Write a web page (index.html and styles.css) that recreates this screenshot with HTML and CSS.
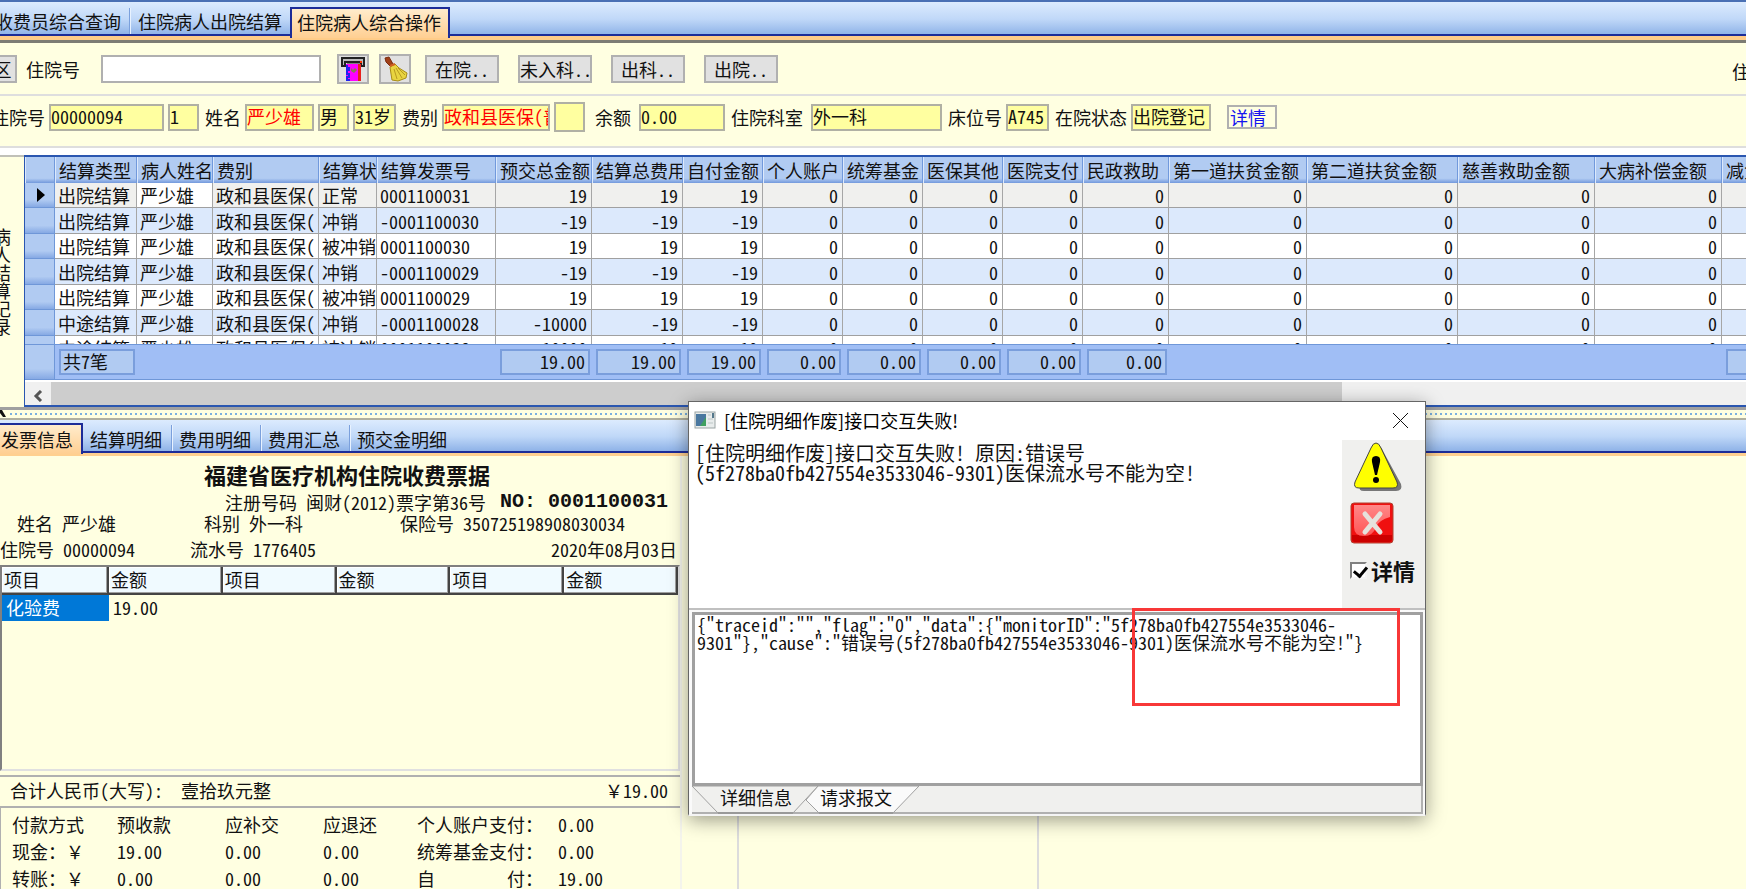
FILE: index.html
```html
<!DOCTYPE html>
<html lang="zh-CN">
  <head>
    <meta charset="UTF-8">
    <meta name="viewport" content="width=device-width, initial-scale=1.0">
    <title>住院病人综合操作</title>
    <link rel="stylesheet" href="styles.css">
  </head>
  <body>
    <nav class="tabs main-tabs">
      <a href="#" class="tab first">收费员综合查询</a>
      <a href="#" class="tab">住院病人出院结算</a>
      <a href="#" class="tab active">住院病人综合操作</a>
    </nav>

    <form class="toolbar">
      <button type="button" class="btn btn-area">区</button>
      <label for="search-no">住院号</label>
      <input type="text" id="search-no" class="search-input">
      <button type="button" class="btn btn-icon" aria-label="读卡">
        <svg width="26" height="26" viewBox="0 0 26 26">
          <path d="M2 2h22v8h-3V6H5v4H2z" fill="#bbb" stroke="#222" stroke-width="2"/>
          <path d="M7 7h13" stroke="#222" stroke-width="1"/>
          <rect x="6" y="8" width="12" height="17" fill="#f0f"/>
          <rect x="18" y="8" width="3" height="17" fill="#e8201c"/>
          <path d="M7 9v3h2v2H7v4h2v3H7v3h3" fill="none" stroke="#2222f0" stroke-width="2"/>
          <path d="M11 12l2 2 2-2 2 2-3 3-3-2z" fill="#8a7a50"/>
          <rect x="20" y="5" width="2" height="2" fill="#f30"/>
        </svg>
      </button>
      <button type="button" class="btn btn-icon" aria-label="清空">
        <svg width="26" height="26" viewBox="0 0 26 26">
          <path d="M3 2l4-1 4 7-3 2-4-4z" fill="#a04018" stroke="#7a2c10" stroke-width="1"/>
          <path d="M8 11l5-3 4 4 8 5-1 5-8 3-6-1-1-6z" fill="#e8d440" stroke="#a88c18" stroke-width="1"/>
          <path d="M12 13l3 10M14 12l6 10M16 12l7 7" fill="none" stroke="#b89a20" stroke-width="1"/>
          <path d="M8 10l5-2" stroke="#d06020" stroke-width="2"/>
        </svg>
      </button>
      <button type="button" class="btn btn-state">在院..</button>
      <button type="button" class="btn btn-state">未入科..</button>
      <button type="button" class="btn btn-state">出科..</button>
      <button type="button" class="btn btn-state">出院..</button>
      <span class="cut-label">住</span>
    </form>

    <form class="patient-bar">
      <label for="p-no">住院号</label>
      <input type="text" id="p-no" class="w-no" value="00000094" readonly>
      <input type="text" class="w-small" value="1" aria-label="次数" readonly>
      <label for="p-name">姓名</label>
      <input type="text" id="p-name" class="w-name red" value="严少雄" readonly>
      <input type="text" class="w-small" value="男" aria-label="性别" readonly>
      <input type="text" class="w-bed" value="31岁" aria-label="年龄" readonly>
      <label for="p-type">费别</label>
      <input type="text" id="p-type" class="w-type red" value="政和县医保(普通)" readonly>
      <input type="text" class="w-small tall" aria-label="类别" readonly>
      <label for="p-balance" class="loose">余额</label>
      <input type="text" id="p-balance" class="w-balance loose" value="0.00" readonly>
      <label for="p-dept">住院科室</label>
      <input type="text" id="p-dept" class="w-dept loose" value="外一科" readonly>
      <label for="p-bed">床位号</label>
      <input type="text" id="p-bed" class="w-bed" value="A745" readonly>
      <label for="p-state">在院状态</label>
      <input type="text" id="p-state" class="w-state" value="出院登记" readonly>
      <button type="button" class="detail-btn">详情</button>
    </form>

    <section class="settle">
      <div class="side-title"><span>病人结算记录</span></div>
      <div class="grid">
        <div class="grid-body">
          <table class="settle-table">
            <colgroup>
              <col class="c-mark"><col class="c-kind"><col class="c-name"><col class="c-type"><col class="c-state"><col class="c-invoice">
              <col class="c-prepay"><col class="c-total"><col class="c-80"><col class="c-80"><col class="c-80"><col class="c-80"><col class="c-80"><col class="c-86">
              <col class="c-aid1"><col class="c-aid2"><col class="c-137"><col class="c-ill"><col class="c-last">
            </colgroup>
            <thead>
              <tr>
                <th></th><th>结算类型</th><th>病人姓名</th><th>费别</th><th>结算状态</th><th>结算发票号</th>
                <th>预交总金额</th><th>结算总费用</th><th>自付金额</th><th>个人账户</th><th>统筹基金</th><th>医保其他</th><th>医院支付</th><th>民政救助</th>
                <th>第一道扶贫金额</th><th>第二道扶贫金额</th><th>慈善救助金额</th><th>大病补偿金额</th><th>减免金额</th>
              </tr>
            </thead>
            <tbody>
              <tr class="current">
                <th><span class="arrow"></span></th><td>出院结算</td><td class="focus">严少雄</td><td>政和县医保(</td><td>正常</td><td>0001100031</td>
                <td>19</td><td>19</td><td>19</td><td>0</td><td>0</td><td>0</td><td>0</td><td>0</td><td>0</td><td>0</td><td>0</td><td>0</td><td></td>
              </tr>
              <tr>
                <th></th><td>出院结算</td><td>严少雄</td><td>政和县医保(</td><td>冲销</td><td>-0001100030</td>
                <td>-19</td><td>-19</td><td>-19</td><td>0</td><td>0</td><td>0</td><td>0</td><td>0</td><td>0</td><td>0</td><td>0</td><td>0</td><td></td>
              </tr>
              <tr>
                <th></th><td>出院结算</td><td>严少雄</td><td>政和县医保(</td><td>被冲销</td><td>0001100030</td>
                <td>19</td><td>19</td><td>19</td><td>0</td><td>0</td><td>0</td><td>0</td><td>0</td><td>0</td><td>0</td><td>0</td><td>0</td><td></td>
              </tr>
              <tr>
                <th></th><td>出院结算</td><td>严少雄</td><td>政和县医保(</td><td>冲销</td><td>-0001100029</td>
                <td>-19</td><td>-19</td><td>-19</td><td>0</td><td>0</td><td>0</td><td>0</td><td>0</td><td>0</td><td>0</td><td>0</td><td>0</td><td></td>
              </tr>
              <tr>
                <th></th><td>出院结算</td><td>严少雄</td><td>政和县医保(</td><td>被冲销</td><td>0001100029</td>
                <td>19</td><td>19</td><td>19</td><td>0</td><td>0</td><td>0</td><td>0</td><td>0</td><td>0</td><td>0</td><td>0</td><td>0</td><td></td>
              </tr>
              <tr>
                <th></th><td>中途结算</td><td>严少雄</td><td>政和县医保(</td><td>冲销</td><td>-0001100028</td>
                <td>-10000</td><td>-19</td><td>-19</td><td>0</td><td>0</td><td>0</td><td>0</td><td>0</td><td>0</td><td>0</td><td>0</td><td>0</td><td></td>
              </tr>
              <tr>
                <th></th><td>中途结算</td><td>严少雄</td><td>政和县医保(</td><td>被冲销</td><td>0001100028</td>
                <td>10000</td><td>19</td><td>19</td><td>0</td><td>0</td><td>0</td><td>0</td><td>0</td><td>0</td><td>0</td><td>0</td><td>0</td><td></td>
              </tr>
            </tbody>
          </table>
        </div>
        <table class="settle-table sum-table">
          <colgroup>
            <col class="c-mark"><col class="c-kind"><col class="c-name"><col class="c-type"><col class="c-state"><col class="c-invoice">
            <col class="c-prepay"><col class="c-total"><col class="c-80"><col class="c-80"><col class="c-80"><col class="c-80"><col class="c-80"><col class="c-86">
            <col class="c-aid1"><col class="c-aid2"><col class="c-137"><col class="c-ill"><col class="c-last">
          </colgroup>
          <tr>
            <th></th><td><span class="count">共7笔</span></td><td></td><td></td><td></td><td></td>
            <td><span>19.00</span></td><td><span>19.00</span></td><td><span>19.00</span></td><td><span>0.00</span></td><td><span>0.00</span></td><td><span>0.00</span></td><td><span>0.00</span></td><td><span>0.00</span></td>
            <td></td><td></td><td></td><td></td><td><span></span></td>
          </tr>
        </table>
        <div class="scrollbar">
          <button type="button" class="scroll-left" aria-label="向左">
            <svg width="10" height="12" viewBox="0 0 10 12"><path d="M8 1L3 6l5 5" fill="none" stroke="#555" stroke-width="3"/></svg>
          </button>
          <div class="thumb"></div>
        </div>
      </div>
    </section>

    <div class="splitter">
      <svg width="6" height="8" viewBox="0 0 6 8"><path d="M0 0h2l4 7H3L0 3z" fill="#111"/></svg>
      <div class="dots"></div>
    </div>

    <nav class="tabs sub-tabs">
      <a href="#" class="tab active">发票信息</a>
      <a href="#" class="tab">结算明细</a>
      <a href="#" class="tab">费用明细</a>
      <a href="#" class="tab">费用汇总</a>
      <a href="#" class="tab">预交金明细</a>
    </nav>

    <main class="bottom">
      <section class="invoice">
        <h1>福建省医疗机构住院收费票据</h1>
        <div class="reg-line"><span>注册号码 闽财(2012)票字第36号</span><strong>NO: 0001100031</strong></div>
        <div class="info-line indent"><span class="i-name">姓名 严少雄</span><span class="i-dept">科别 外一科</span><span>保险号 350725198908030034</span></div>
        <div class="info-line second"><span class="i-no">住院号 00000094</span><span>流水号 1776405</span><span class="i-date">2020年08月03日</span></div>
        <div class="item-box">
          <table class="item-table">
            <thead>
              <tr><th>项目</th><th>金额</th><th>项目</th><th>金额</th><th>项目</th><th>金额</th></tr>
            </thead>
            <tbody>
              <tr><td class="selected">化验费</td><td>19.00</td><td></td><td></td><td></td><td></td></tr>
            </tbody>
          </table>
        </div>
        <div class="total-line"><span>合计人民币(大写): &nbsp;壹拾玖元整</span><span><span class="full">￥</span>19.00</span></div>
        <table class="pay-table">
          <tr><td>付款方式</td><td>预收款</td><td>应补交</td><td>应退还</td><td>个人账户支付：</td><td>0.00</td></tr>
          <tr><td>现金：<span class="full">￥</span></td><td>19.00</td><td>0.00</td><td>0.00</td><td>统筹基金支付：</td><td>0.00</td></tr>
          <tr><td>转账：<span class="full">￥</span></td><td>0.00</td><td>0.00</td><td>0.00</td><td><span class="spread"><i>自</i><i>付：</i></span></td><td>19.00</td></tr>
        </table>
      </section>
      <div class="blank narrow"></div>
      <div class="blank middle"></div>
    </main>

    <div class="dialog" role="dialog" aria-labelledby="dialog-title">
      <div class="dialog-title">
        <svg width="22" height="18" viewBox="0 0 22 18">
          <rect x="1" y="1" width="20" height="16" fill="#e8ecec" stroke="#9aa4a4" stroke-width="1"/>
          <path d="M2 3h10v12H2z" fill="#4a78a0"/>
          <path d="M12 6L6 15h6z" fill="#3fa060"/>
          <path d="M14 4h3M14 8h5M14 12h5" stroke="#bcc6c6" stroke-width="1"/>
          <path d="M18 2h2v5h-2z" fill="#55788c"/>
        </svg>
        <h2 id="dialog-title">[住院明细作废]接口交互失败!</h2>
        <button type="button" class="close" aria-label="关闭">
          <svg width="17" height="17" viewBox="0 0 17 17"><path d="M1 1l15 15M16 1L1 16" stroke="#111" stroke-width="1"/></svg>
        </button>
      </div>
      <div class="dialog-main">
        <p class="message">[住院明细作废]接口交互失败! 原因:错误号<br>(5f278ba0fb427554e3533046-9301)医保流水号不能为空!</p>
        <div class="dialog-side">
          <svg class="warn" width="50" height="50" viewBox="0 0 50 50">
            <path d="M25 4q3 0 5 5l18 33q2 7-5 7H11q-6 0-4-5z" fill="#777"/>
            <path d="M23 1q3 0 5 5l16 34q2 6-4 6H6q-6 0-4-6L18 6q2-5 5-5z" fill="#ff0" stroke="#444" stroke-width="1"/>
            <path d="M23 14q5 0 4 6l-3 13h-2l-3-13q-1-6 4-6z" fill="#000"/>
            <circle cx="23" cy="38" r="3" fill="#000"/>
          </svg>
          <button type="button" class="error-btn" aria-label="错误">
            <svg width="44" height="42" viewBox="0 0 44 42">
              <defs>
                <linearGradient id="gloss" x1="0" y1="0" x2="0" y2="1">
                  <stop offset="0" stop-color="#f88"/>
                  <stop offset="1" stop-color="#f55"/>
                </linearGradient>
              </defs>
              <rect x="1" y="1" width="42" height="40" rx="3" fill="#f01010" stroke="#b04030" stroke-width="1"/>
              <path d="M2 33h40v4q0 3-3 3H5q-3 0-3-3z" fill="#c00"/>
              <path d="M4 3h36v12q-11 3-14 10-3 9-12 9-10 0-10-9z" fill="url(#gloss)"/>
              <path d="M15 12l15 18M30 12L15 30" stroke="#e6e2dc" stroke-width="5" stroke-linecap="round"/>
            </svg>
          </button>
          <label class="check"><input type="checkbox" checked>详情</label>
        </div>
      </div>
      <div class="detail-panel">
        <div class="detail-text">{"traceid":"","flag":"0","data":{"monitorID":"5f278ba0fb427554e3533046-<br>9301"},"cause":"错误号(5f278ba0fb427554e3533046-9301)医保流水号不能为空!"}</div>
        <div class="detail-tabs">
          <svg class="tab-shape" width="232" height="28" viewBox="0 0 232 28">
            <path d="M126 0l-12 14 13 13h74l26-27z" fill="#fafafa" stroke="#a0a0a0" stroke-width="1"/>
            <path d="M0 0l26 27h75l25-27z" fill="#f0f0ee" stroke="#a0a0a0" stroke-width="1"/>
            <path d="M26 27h75M127 27h74" stroke="#999" stroke-width="2"/>
          </svg>
          <button type="button">详细信息</button>
          <button type="button">请求报文</button>
        </div>
      </div>
      <div class="highlight"></div>
    </div>
  </body>
</html>
```
FILE: styles.css
```css
* {
  box-sizing: border-box;
}

html, body {
  margin: 0;
  height: 100%;
}

body {
  display: flex;
  flex-direction: column;
  overflow: hidden;
  position: relative;
  background-color: #ffffe1;
  color: #111;
  font-family: "Noto Sans CJK SC", "Liberation Mono", monospace;
  font-size: 18px;
  line-height: 20px;
  font-feature-settings: "hwid";
  font-variant-ligatures: none;
  white-space: nowrap;
}

input, button {
  font: inherit;
  font-feature-settings: inherit;
  color: inherit;
  padding: 0;
  margin: 0;
}

a {
  color: inherit;
  text-decoration: none;
}

.full {
  font-feature-settings: normal;
}

/* tabs */
.tabs {
  display: flex;
  flex: none;
  align-items: flex-end;
  background: linear-gradient(#dcebfe, #c0d8f8 45%, #7ea6e2);
}

.main-tabs {
  height: 43px;
  border-top: 2px solid #4a70b4;
  border-bottom: 3px solid #7c7c74;
  box-shadow: inset 0 -4px #ffcc88, inset 0 -6px #1c2c98;
}

.sub-tabs {
  height: 36px;
  box-shadow: inset 0 -3px #ffd090, inset 0 -5px #1c2c98;
}

.tab {
  height: 26px;
  margin-bottom: 6px;
  padding: 3px 8px 0;
  border-left: 1px solid #7ba0dc;
  box-shadow: inset 1px 0 #e8f2ff;
}

.tab.first {
  margin-left: -14px;
  border-color: transparent;
}

.sub-tabs .tab {
  margin-bottom: 5px;
  padding: 4px 9px 0 7px;
}

.tab.active,
.sub-tabs .tab.active {
  height: 31px;
  margin-bottom: 2px;
  padding: 3px 7px 0 5px;
  border: 2px solid #1c2c98;
  border-bottom: 0;
  background: linear-gradient(#ffeccc, #ffcf92);
  box-shadow: none;
}

.tab.active + .tab {
  border-left: 0;
  box-shadow: none;
}

.sub-tabs .tab.active {
  padding: 4px 8px 0 1px;
  border-left: 0;
}

/* search row */
.toolbar {
  display: flex;
  flex: none;
  align-items: center;
  height: 53px;
  border-bottom: 2px solid #dedede;
}

.btn {
  height: 28px;
  border: 2px solid #b0b0b0;
  background-color: #e1e1e1;
}

.btn-area {
  width: 29px;
  margin: 0 9px 0 -12px;
}

.search-input {
  width: 220px;
  height: 28px;
  margin: 0 16px 0 21px;
  border: 2px solid #b0b0b0;
  background-color: #fff;
}

.btn-icon {
  display: flex;
  align-items: center;
  justify-content: center;
  width: 32px;
  height: 30px;
  margin-right: 10px;
}

.btn-state {
  width: 74px;
  margin: 0 4px;
  line-height: 18px;
}

.btn-state + .btn-state {
  margin-left: 15px;
}

.cut-label {
  margin-left: auto;
  margin-right: -4px;
  padding-top: 4px;
}

/* patient info */
.patient-bar {
  display: flex;
  flex: none;
  align-items: center;
  gap: 4px;
  height: 52px;
  padding-bottom: 8px;
  margin-left: -11px;
  border-bottom: 2px solid #dedede;
}

.patient-bar label {
  margin-left: 2px;
}

.patient-bar input {
  height: 27px;
  padding: 0 0 2px;
  border: 2px solid #b0b0a4;
  background-color: #ffffa0;
}

.patient-bar .loose {
  margin-left: 4px;
}

.patient-bar label.loose {
  margin-left: 6px;
}

.patient-bar .red { color: #f00; }
.patient-bar .tall { height: 30px; }
.w-no { width: 115px; }
.w-small { width: 31px; }
.w-name { width: 69px; }
.w-bed { width: 43px; }
.w-type { width: 108px; }
.w-balance { width: 86px; }
.w-dept { width: 131px; }
.w-state { width: 80px; }

.detail-btn {
  width: 50px;
  height: 24px;
  margin-left: 12px;
  padding-left: 1px;
  border: 2px solid #b0b0b0;
  background: none;
  color: #1414f0;
  line-height: 18px;
  text-align: left;
}

/* settlement grid */
.settle {
  display: flex;
  flex: none;
  border-top: 7px solid #fff;
}

.side-title {
  display: flex;
  align-items: center;
  flex: none;
  width: 24px;
  border-top: 2px solid #c0c0b8;
  overflow: hidden;
}

.side-title span {
  margin-left: -7px;
  writing-mode: vertical-rl;
  line-height: 18px;
}

.grid {
  flex: 1;
  min-width: 0;
  overflow: hidden;
  border: 2px solid #2a56b0;
  border-width: 2px 0 2px 1px;
}

.grid-body {
  height: 187px;
  overflow: hidden;
}

.settle-table {
  width: 1829px;
  table-layout: fixed;
  border-collapse: separate;
  border-spacing: 0;
}

.c-mark { width: 30px; }
.c-kind { width: 82px; }
.c-name { width: 76px; }
.c-type { width: 106px; }
.c-state { width: 58px; }
.c-invoice { width: 119px; }
.c-prepay { width: 96px; }
.c-total { width: 91px; }
.c-80 { width: 80px; }
.c-86 { width: 86px; }
.c-aid1 { width: 138px; }
.c-aid2 { width: 151px; }
.c-137 { width: 137px; }
.c-ill { width: 127px; }

.settle-table th,
.settle-table td {
  padding: 0;
  font-weight: normal;
  text-align: left;
  overflow: hidden;
}

.settle-table thead th {
  height: 26px;
  padding-left: 4px;
  border-right: 1px solid #7199dc;
  background: linear-gradient(#b1cbf2 82%, #7399dc);
  box-shadow: inset 1px 0 #dce9fc;
}

.settle-table tbody th {
  background: linear-gradient(#b1cbf2 70%, #86a9e4);
  border-bottom: 1px solid #6f97d8;
  border-right: 1px solid #6f97d8;
}

.settle-table tbody td {
  height: 25px;
  padding: 0 4px 0 3px;
  border-right: 1px solid #a6a6a6;
  border-bottom: 1px solid #a0a0a0;
  background-color: #fff;
}

.settle-table tbody tr:nth-child(even) td {
  height: 26px;
  background-color: #dce9fc;
}

.settle-table tbody td:nth-child(4),
.settle-table tbody td:nth-child(5) {
  padding-right: 0;
}

.settle-table tbody td:nth-child(n+7) {
  text-align: right;
}

.settle-table tbody .current td {
  background-color: #f0f0ee;
}

.settle-table tbody .current td.focus {
  background-color: #fff;
}

.arrow {
  display: block;
  width: 0;
  margin-left: 12px;
  border: 7px solid transparent;
  border-left: 8px solid #000;
  border-right: 0;
}

.settle-table.sum-table {
  border-top: 1px solid #6f97d8;
  border-bottom: 1px solid #6f97d8;
  background-color: #a0bef5;
}

.sum-table tbody th {
  border-bottom: 0;
}

.settle-table.sum-table tbody td {
  height: 34px;
  padding: 0 2px 0 4px;
  border: 0;
  background: none;
}

.settle-table.sum-table tbody td:nth-child(2) {
  overflow: visible;
}

.sum-table span {
  display: block;
  height: 26px;
  padding: 0 3px;
  border: 2px solid #7a9edc;
  background-color: #b1cbf2;
  line-height: 20px;
}

.sum-table .count {
  width: 76px;
  padding: 0 2px;
}

.scrollbar {
  display: flex;
  height: 25px;
  border-top: 2px solid #fff;
  background-color: #f0f0f0;
}

.scroll-left {
  width: 26px;
  border: 0;
  background: none;
}

.thumb {
  width: 75%;
  background-color: #cdcdcd;
}

.splitter {
  display: flex;
  flex: none;
  align-items: center;
  gap: 4px;
  height: 13px;
  border-top: 3px solid #a0a0a0;
  border-bottom: 2px solid #b0b0a0;
}

.dots {
  flex: 1;
  height: 2px;
  background: repeating-linear-gradient(90deg, #7ab0e0 0 2px, transparent 2px 5px);
}

/* invoice */
.bottom {
  display: flex;
  flex: 1;
  min-height: 0;
}

.invoice {
  flex: none;
  width: 682px;
  border-right: 2px solid #f4f4ec;
}

.invoice h1 {
  margin: 4px 0 0 204px;
  font-size: 22px;
  line-height: 28px;
}

.reg-line {
  display: flex;
  align-items: center;
  gap: 14px;
  height: 26px;
  padding: 2px 0 0 225px;
}

.reg-line strong {
  font-family: "Liberation Mono", monospace;
  font-size: 20px;
}

.info-line {
  display: flex;
  height: 20px;
  line-height: 18px;
}

.info-line.indent {
  padding-left: 17px;
}

.info-line.second {
  height: 30px;
  align-items: center;
  margin-bottom: 1px;
}

.i-name { width: 187px; }
.i-dept { width: 196px; }
.i-no { width: 190px; }
.i-date { margin: 0 3px 0 auto; }

.item-box {
  height: 206px;
  border: 2px solid #808080;
  border-right-color: #e0e0e0;
  border-bottom-color: #e0e0e0;
}

.item-table {
  width: 100%;
  table-layout: fixed;
  border-collapse: separate;
  border-spacing: 0;
  line-height: 18px;
}

.item-table th {
  height: 28px;
  padding: 0 2px 2px;
  border: 2px solid #444;
  border-width: 0 2px 2px 0;
  background-color: #f0faff;
  box-shadow: inset -1px -1px #a0a0a0, inset 1px 1px #fff;
  font-weight: normal;
  text-align: left;
}

.item-table th:first-child {
  width: 107px;
}

.item-table td {
  height: 26px;
  padding: 0 4px 2px;
}

.item-table .selected {
  background-color: #0078d7;
  color: #fff;
}

.total-line {
  display: flex;
  justify-content: space-between;
  height: 31px;
  margin-top: 4px;
  padding: 3px 12px 0 10px;
  border-top: 2px solid #b0b0b0;
}

.pay-table {
  width: 100%;
  padding-top: 2px;
  border-spacing: 0;
  border-top: 2px solid #b0b0b0;
  border-left: 1px solid #b0b0b0;
  table-layout: fixed;
}

.pay-table td {
  height: 27px;
  padding: 0;
}

.pay-table td:nth-child(1) { width: 116px; padding-left: 11px; }
.pay-table td:nth-child(2) { width: 108px; }
.pay-table td:nth-child(3) { width: 98px; }
.pay-table td:nth-child(4) { width: 94px; }
.pay-table td:nth-child(5) { width: 141px; }

.spread {
  display: flex;
  justify-content: space-between;
  width: 126px;
}

.spread i {
  font-style: normal;
}

.blank {
  border-right: 2px solid #dcdcdc;
}

.blank.narrow { width: 57px; }
.blank.middle { width: 300px; }

/* error dialog */
.dialog {
  position: absolute;
  left: 688px;
  top: 401px;
  width: 738px;
  border: 1px solid #666;
  border-bottom: 2px solid #f4f4f4;
  background-color: #fff;
  box-shadow: 0 4px 18px rgba(0, 0, 0, 0.4);
}

.dialog-title {
  display: flex;
  align-items: center;
  gap: 8px;
  height: 38px;
  padding: 0 16px 2px 5px;
  color: #000;
}

.dialog-title h2 {
  margin: 0;
  font-size: 18px;
  font-weight: normal;
  font-feature-settings: normal;
}

.close {
  display: flex;
  margin-left: auto;
  border: 0;
  background: none;
}

.dialog-main {
  display: flex;
  height: 168px;
}

.message {
  flex: 1;
  margin: 0;
  padding: 3px 0 0 6px;
  font-size: 20px;
  line-height: 20px;
}

.dialog-side {
  display: flex;
  flex-direction: column;
  align-items: flex-start;
  width: 83px;
  padding-left: 8px;
  background-color: #f0f0ee;
}

.warn {
  margin: 2px 0 10px 3px;
}

.error-btn {
  display: flex;
  border: 0;
  background: none;
}

.check {
  display: flex;
  align-items: center;
  gap: 4px;
  margin-top: 16px;
  font-size: 22px;
  font-weight: bold;
}

.check input {
  appearance: none;
  width: 17px;
  height: 17px;
  border: 2px solid #808080;
  border-right-color: #f4f4f4;
  border-bottom-color: #f4f4f4;
  background-color: #fff;
}

.check input:checked::before {
  content: "";
  display: block;
  width: 6px;
  height: 10px;
  margin: 0 0 0 4px;
  border: solid #000;
  border-width: 0 3px 3px 0;
  transform: rotate(40deg);
}

.detail-panel {
  padding: 2px 2px 0 3px;
  border-top: 2px solid #c0c0c0;
  background-color: #fafafa;
}

.detail-text {
  height: 174px;
  padding: 0 2px;
  border: 3px solid #a0a0a0;
  background-color: #fff;
  line-height: 18px;
}

.detail-tabs {
  position: relative;
  display: flex;
  gap: 28px;
  height: 28px;
  padding-left: 28px;
  border-right: 2px solid #b0b0b0;
  border-bottom: 2px solid #b0b0b0;
  background-color: #f0f0ee;
}

.detail-tabs button {
  position: relative;
  padding-bottom: 4px;
  border: 0;
  background: none;
}

.tab-shape {
  position: absolute;
  left: 0;
  top: 0;
}

/* marks the failing serial number in the response */
.highlight {
  position: absolute;
  left: 443px;
  top: 206px;
  width: 268px;
  height: 98px;
  border: 3px solid #f83838;
}
```
